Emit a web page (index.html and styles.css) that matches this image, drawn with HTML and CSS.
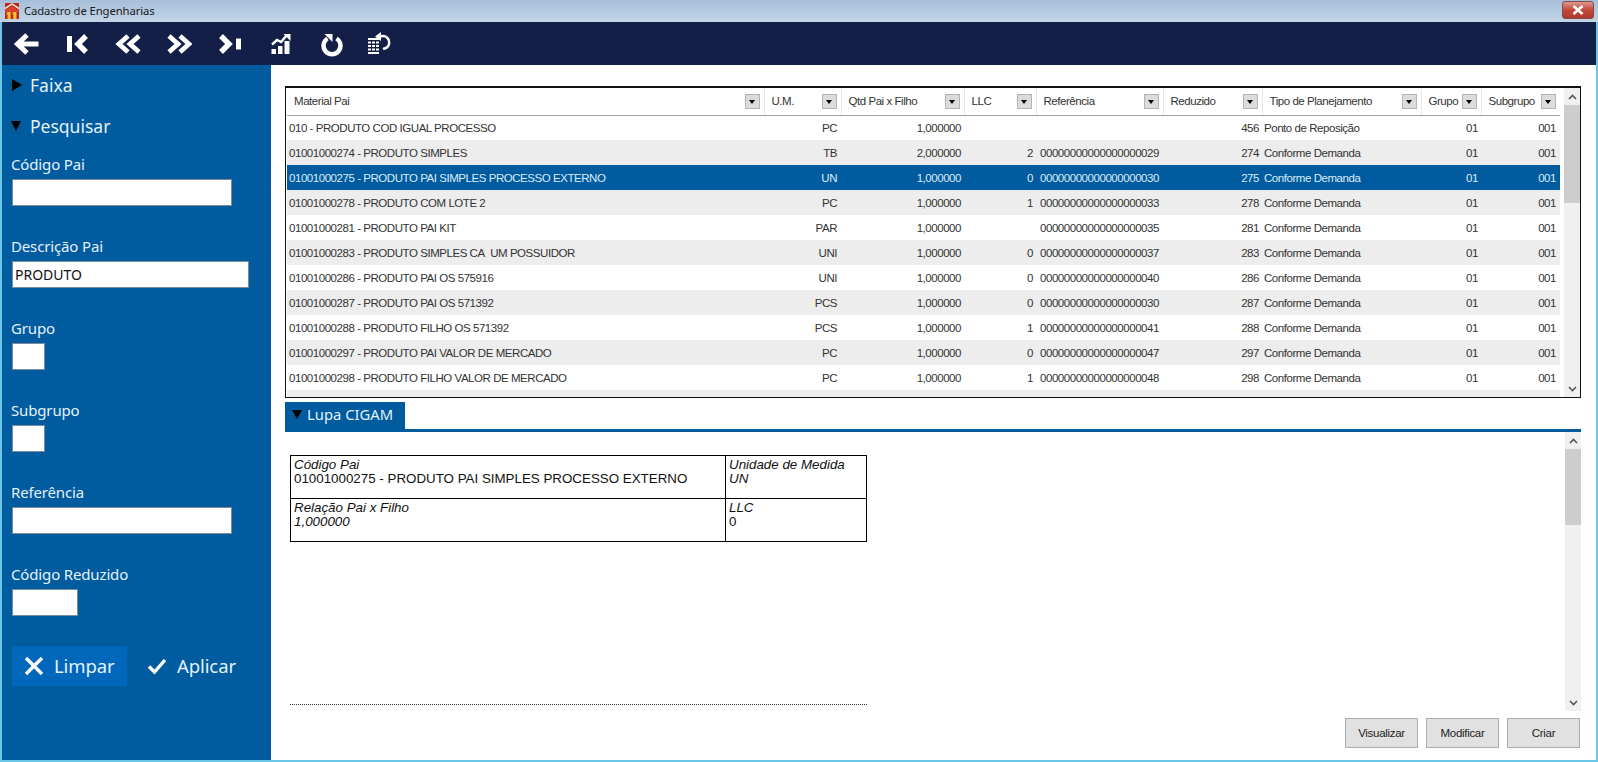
FILE: index.html
```html
<!DOCTYPE html>
<html lang="pt">
<head>
<meta charset="utf-8">
<title>Cadastro de Engenharias</title>
<link rel="stylesheet" href="styles.css">
</head>
<body>
<div class="window">
  <header class="titlebar">
    <div class="title-left">
      <svg class="app-logo" viewBox="0 0 14 16"><path d="M0 0h14v16H0z" fill="#b8261c"/><path d="M0 4.500 7 0l7 4.500v2L7 2 0 6.500z" fill="#f0d8c8"/><path d="M0 7.500 7 3l7 4.500V9H0z" fill="#d8402c"/><path d="M2.500 9h3.200v7H2.500zM8.300 9h3.200v7H8.300z" fill="#f0c030"/><path d="M1.500 9.500h1.200v2H1.500zM7.300 9.500h1.200v2H7.300z" fill="#f0c030"/></svg>
      <span>Cadastro de Engenharias</span>
    </div>
    <button class="close"><svg viewBox="0 0 12 10"><path d="M1.500 1 10.500 9M10.500 1 1.500 9" stroke="#fff" stroke-width="2.600"/></svg></button>
  </header>
  <div class="frame">
    <nav class="toolbar">
      <svg class="tool" viewBox="0 0 26 26"><path d="M25.500 13H6M14 4 4.500 13l9.500 9" fill="none" stroke="#fff" stroke-width="5"/></svg>
      <svg class="tool" viewBox="0 0 26 26"><path d="M3 5h5v16H3z" fill="#fff"/><path d="M22 5l-8 8 8 8" fill="none" stroke="#fff" stroke-width="5.400"/></svg>
      <svg class="tool" viewBox="0 0 26 26"><path d="M13 5l-9 8 9 8M24 5l-9 8 9 8" fill="none" stroke="#fff" stroke-width="4.800"/></svg>
      <svg class="tool" viewBox="0 0 26 26"><path d="M3 5l9 8-9 8M14 5l9 8-9 8" fill="none" stroke="#fff" stroke-width="4.800"/></svg>
      <svg class="tool" viewBox="0 0 26 26"><path d="M4 5l8 8-8 8" fill="none" stroke="#fff" stroke-width="5.400"/><path d="M19 7.500h5v11h-5z" fill="#fff"/></svg>
      <svg class="tool" viewBox="0 0 26 26"><path d="M3.500 18h4.500v5H3.500zM10 15h4.500v8H10zM16.500 10h5v13h-5z" fill="#fff"/><path d="M4 13.500l5-4.500 4 2 6-7" fill="none" stroke="#fff" stroke-width="2.400"/><path d="M15.500 3h7v7z" fill="#fff"/></svg>
      <svg class="tool" viewBox="0 0 26 26"><path d="M8.500 7.500a8.500 8.500 0 1 0 9 0" fill="none" stroke="#fff" stroke-width="4.400"/><path d="M5.500 3h8v8z" fill="#fff"/></svg>
      <svg class="tool tool-last" viewBox="0 0 26 26"><path d="M3 7h11v2H3zM3 10.500h3v2H3zM7 10.500h3v2H7zM11 10.500h3v2h-3zM3 14h3v2H3zM7 14h3v2H7zM11 14h3v2h-3zM3 17.500h3v2H3zM7 17.500h3v2H7zM11 17.500h3v2h-3zM3 21h11v2H3z" fill="#fff"/><path d="M14 6c7-3 11 2 10 7s-4 4-6 5" fill="none" stroke="#fff" stroke-width="2.400"/><path d="M16 1v9l-6-4.500z" fill="#fff"/></svg>
    </nav>
    <div class="content">
      <aside class="sidebar">
        <div class="section"><i class="tri tri-right"></i>Faixa</div>
        <div class="section section-open"><i class="tri tri-down"></i>Pesquisar</div>
        <div class="fields">
          <label class="field">Código Pai<input class="input input-lg" type="text"></label>
          <label class="field">Descrição Pai<input class="input input-xl" type="text" value="PRODUTO"></label>
          <label class="field">Grupo<input class="input input-xs" type="text"></label>
          <label class="field">Subgrupo<input class="input input-xs" type="text"></label>
          <label class="field">Referência<input class="input input-lg" type="text"></label>
          <label class="field">Código Reduzido<input class="input input-sm" type="text"></label>
        </div>
        <div class="side-actions">
          <button class="side-btn side-btn-on"><svg viewBox="0 0 20 20"><path d="M2 2 18 18M18 2 2 18" stroke="#fff" stroke-width="3.400"/></svg>Limpar</button>
          <button class="side-btn"><svg viewBox="0 0 20 20"><path d="M2 10.500 7.500 16 18 4" fill="none" stroke="#fff" stroke-width="3.400"/></svg>Aplicar</button>
        </div>
      </aside>
      <main class="main">
        <section class="grid">
          <div class="grid-view">
            <table class="data">
              <colgroup>
                <col class="c1"><col class="c2"><col class="c3"><col class="c4"><col class="c5"><col class="c6"><col class="c7"><col class="c8"><col class="c9">
              </colgroup>
              <thead>
                <tr>
                  <th><div class="th"><span>Material Pai</span><b class="fbtn"></b></div></th>
                  <th><div class="th"><span>U.M.</span><b class="fbtn"></b></div></th>
                  <th><div class="th"><span>Qtd Pai x Filho</span><b class="fbtn"></b></div></th>
                  <th><div class="th"><span>LLC</span><b class="fbtn"></b></div></th>
                  <th><div class="th"><span>Referência</span><b class="fbtn"></b></div></th>
                  <th><div class="th"><span>Reduzido</span><b class="fbtn"></b></div></th>
                  <th><div class="th"><span>Tipo de Planejamento</span><b class="fbtn"></b></div></th>
                  <th><div class="th"><span>Grupo</span><b class="fbtn"></b></div></th>
                  <th><div class="th"><span>Subgrupo</span><b class="fbtn"></b></div></th>
                </tr>
              </thead>
              <tbody>
                <tr><td>010 - PRODUTO COD IGUAL PROCESSO</td><td class="r">PC</td><td class="r">1,000000</td><td class="r"></td><td></td><td class="r">456</td><td>Ponto de Reposição</td><td class="r">01</td><td class="r">001</td></tr>
                <tr><td>01001000274 - PRODUTO SIMPLES</td><td class="r">TB</td><td class="r">2,000000</td><td class="r">2</td><td>00000000000000000029</td><td class="r">274</td><td>Conforme Demanda</td><td class="r">01</td><td class="r">001</td></tr>
                <tr class="sel"><td>01001000275 - PRODUTO PAI SIMPLES PROCESSO EXTERNO</td><td class="r">UN</td><td class="r">1,000000</td><td class="r">0</td><td>00000000000000000030</td><td class="r">275</td><td>Conforme Demanda</td><td class="r">01</td><td class="r">001</td></tr>
                <tr><td>01001000278 - PRODUTO COM LOTE 2</td><td class="r">PC</td><td class="r">1,000000</td><td class="r">1</td><td>00000000000000000033</td><td class="r">278</td><td>Conforme Demanda</td><td class="r">01</td><td class="r">001</td></tr>
                <tr><td>01001000281 - PRODUTO PAI KIT</td><td class="r">PAR</td><td class="r">1,000000</td><td class="r"></td><td>00000000000000000035</td><td class="r">281</td><td>Conforme Demanda</td><td class="r">01</td><td class="r">001</td></tr>
                <tr><td>01001000283 - PRODUTO SIMPLES CA&nbsp; UM POSSUIDOR</td><td class="r">UNI</td><td class="r">1,000000</td><td class="r">0</td><td>00000000000000000037</td><td class="r">283</td><td>Conforme Demanda</td><td class="r">01</td><td class="r">001</td></tr>
                <tr><td>01001000286 - PRODUTO PAI OS 575916</td><td class="r">UNI</td><td class="r">1,000000</td><td class="r">0</td><td>00000000000000000040</td><td class="r">286</td><td>Conforme Demanda</td><td class="r">01</td><td class="r">001</td></tr>
                <tr><td>01001000287 - PRODUTO PAI OS 571392</td><td class="r">PCS</td><td class="r">1,000000</td><td class="r">0</td><td>00000000000000000030</td><td class="r">287</td><td>Conforme Demanda</td><td class="r">01</td><td class="r">001</td></tr>
                <tr><td>01001000288 - PRODUTO FILHO OS 571392</td><td class="r">PCS</td><td class="r">1,000000</td><td class="r">1</td><td>00000000000000000041</td><td class="r">288</td><td>Conforme Demanda</td><td class="r">01</td><td class="r">001</td></tr>
                <tr><td>01001000297 - PRODUTO PAI VALOR DE MERCADO</td><td class="r">PC</td><td class="r">1,000000</td><td class="r">0</td><td>00000000000000000047</td><td class="r">297</td><td>Conforme Demanda</td><td class="r">01</td><td class="r">001</td></tr>
                <tr><td>01001000298 - PRODUTO FILHO VALOR DE MERCADO</td><td class="r">PC</td><td class="r">1,000000</td><td class="r">1</td><td>00000000000000000048</td><td class="r">298</td><td>Conforme Demanda</td><td class="r">01</td><td class="r">001</td></tr>
                <tr><td>&nbsp;</td><td></td><td></td><td></td><td></td><td></td><td></td><td></td><td></td></tr>
              </tbody>
            </table>
          </div>
          <div class="vscroll vscroll-grid">
            <svg class="sarrow" viewBox="0 0 9 6"><path d="M1 5 4.500 1.500 8 5" fill="none" stroke="#555" stroke-width="1.600"/></svg>
            <div class="sarea"><div class="thumb thumb-grid"></div></div>
            <svg class="sarrow" viewBox="0 0 9 6"><path d="M1 1 4.500 4.500 8 1" fill="none" stroke="#555" stroke-width="1.600"/></svg>
          </div>
        </section>
        <div class="tab"><i class="tri tri-down tri-sm"></i>Lupa CIGAM</div>
        <section class="lupa">
          <div class="report">
            <table class="rep">
              <tr class="rep-top">
                <td class="rep-a"><em>Código Pai</em><br>01001000275 - PRODUTO PAI SIMPLES PROCESSO EXTERNO</td>
                <td class="rep-b"><em>Unidade de Medida</em><br><em>UN</em></td>
              </tr>
              <tr class="rep-bot">
                <td class="rep-a"><em>Relação Pai x Filho</em><br><em>1,000000</em></td>
                <td class="rep-b"><em>LLC</em><br>0</td>
              </tr>
            </table>
            <div class="dotted"></div>
          </div>
          <div class="vscroll vscroll-lupa">
            <svg class="sarrow" viewBox="0 0 9 6"><path d="M1 5 4.500 1.500 8 5" fill="none" stroke="#555" stroke-width="1.600"/></svg>
            <div class="sarea"><div class="thumb thumb-lupa"></div></div>
            <svg class="sarrow" viewBox="0 0 9 6"><path d="M1 1 4.500 4.500 8 1" fill="none" stroke="#555" stroke-width="1.600"/></svg>
          </div>
        </section>
        <div class="actions">
          <button class="act">Visualizar</button>
          <button class="act">Modificar</button>
          <button class="act">Criar</button>
        </div>
      </main>
    </div>
  </div>
</div>
</body>
</html>
```
FILE: styles.css
```css
* { box-sizing: border-box; }
html, body { margin: 0; padding: 0; width: 1598px; height: 762px; overflow: hidden; }
body { font-family: "Liberation Sans", Arial, sans-serif; background: #fff; }
.window { width: 1598px; height: 762px; display: flex; flex-direction: column; }

.titlebar { height: 22px; flex: none; display: flex; justify-content: space-between; align-items: flex-start; background: linear-gradient(#a6bfd9, #c3d5e6); padding: 0 4px 0 5px; }
.title-left { display: flex; align-items: center; gap: 5px; height: 21px; font: 11.300px "Noto Sans", sans-serif; letter-spacing: -0.1px; color: #1a1a1a; }
.app-logo { width: 14px; height: 16px; }
.close { width: 32px; height: 18px; margin-top: 1px; padding: 0; border: 1px solid #8a4a44; border-radius: 3px; background: linear-gradient(#dc9a90, #c4473a 50%, #b03a30); display: flex; align-items: center; justify-content: center; }
.close svg { width: 12px; height: 10px; }

.frame { flex: 1; min-height: 0; display: flex; flex-direction: column; border: solid #6cc6e6; border-width: 0 2px 2px; }
.toolbar { height: 43px; flex: none; background: #131f47; display: flex; align-items: center; gap: 25px; padding-left: 11px; }
.tool { width: 26px; height: 26px; flex: none; }
.tool-last { margin-left: -5px; }

.content { flex: 1; min-height: 0; display: flex; }
.sidebar { width: 269px; flex: none; background: #005b9f; color: #e4f1fb; font: 15px "Noto Sans", sans-serif; letter-spacing: -0.15px; padding: 8px 0 0 9px; }
.section { display: flex; align-items: center; height: 24px; font-size: 17.500px; letter-spacing: 0; gap: 8px; }
.section-open { margin-top: 17px; gap: 9px; }
.tri { display: block; width: 0; height: 0; flex: none; }
.tri-right { margin-left: 1px; border: 6px solid transparent; border-left: 10px solid #000; border-right: 0; }
.tri-down { border: 5.500px solid transparent; border-top: 10px solid #000; border-bottom: 0; }
.tri-sm { border-width: 9px 5px 0; }

.fields { margin-top: 13px; display: flex; flex-direction: column; gap: 27px; }
.field { display: flex; flex-direction: column; height: 55px; line-height: 26px; }
.input { display: block; height: 27px; margin: 2px 0 0 1px; background: #fff; border: 1px solid #7a8ba0; padding: 0 2px; font: 14px "Noto Sans", sans-serif; color: #111; outline: 0; border-radius: 0; }
.input-lg { width: 220px; }
.input-xl { width: 237px; }
.input-xs { width: 33px; }
.input-sm { width: 66px; }

.side-actions { display: flex; margin: 30px 0 0 1px; }
.side-btn { width: 115px; height: 40px; border: 0; background: none; color: #e4f1fb; font: 18.500px "Noto Sans", sans-serif; letter-spacing: -0.1px; display: flex; align-items: center; gap: 10px; padding: 0 0 2px 12px; }
.side-btn svg { width: 20px; height: 20px; flex: none; margin-top: 2px; }
.side-btn-on { background: #0067bb; }
.side-btn + .side-btn { padding-left: 20px; }

.main { flex: 1; min-width: 0; background: #fff; padding: 21px 15px 0 14px; display: flex; flex-direction: column; }
.grid { height: 312px; flex: none; display: flex; border: solid #111; border-width: 2px 1px 1px; background: #fff; }
.grid-view { width: 1273px; margin-left: 1px; flex: none; overflow: hidden; }
.data { width: 1273px; table-layout: fixed; border-collapse: collapse; font: 11.500px "Liberation Sans", sans-serif; letter-spacing: -0.45px; color: #333; }
.c1 { width: 477px; } .c2 { width: 77px; } .c3 { width: 123px; } .c4 { width: 72px; } .c5 { width: 127px; } .c6 { width: 99px; } .c7 { width: 159px; } .c8 { width: 60px; } .c9 { width: 79px; }
.data th { height: 27px; padding: 0; font-weight: 400; text-align: left; border-bottom: 1px solid #a0a0a0; border-right: 1px solid #e6e6e6; }
.th { display: flex; align-items: center; justify-content: space-between; padding: 0 4px 0 7px; }
.fbtn { width: 15px; height: 15px; background: #dcdcdc; border: 1px solid #b4b4b4; position: relative; flex: none; }
.fbtn::after { content: ""; position: absolute; left: 3px; top: 5px; border: 3.500px solid transparent; border-top: 4px solid #000; border-bottom: 0; }
.data td { height: 25px; padding: 0 3px 0 4px; white-space: nowrap; overflow: hidden; }
.data td:first-child { padding-left: 2px; }
.data td:nth-child(2), .data td:nth-child(9) { padding-right: 4px; }
.data td:nth-child(7) { padding-left: 2px; }
.data td.r { text-align: right; }
.data tbody tr:nth-child(even) td { background: #ededed; }
.data tbody tr.sel td { background: #005b9f; color: #dcecf8; }

.vscroll { display: flex; flex-direction: column; align-items: stretch; background: #f0f0f0; width: 16px; flex: none; }
.vscroll-grid { margin-left: 4px; }
.sarrow { width: 9px; height: 6px; margin: 6px auto 5px; flex: none; }
.sarea { flex: 1; min-height: 0; }
.thumb { background: #cdcdcd; }
.thumb-grid { height: 98px; }
.thumb-lupa { height: 76px; }

.tab { width: 120px; height: 27px; flex: none; margin-top: 4px; background: #005b9f; color: #e4f1fb; font: 14.800px "Noto Sans", sans-serif; display: flex; align-items: center; gap: 5px; padding: 0 0 3px 7px; }
.lupa { height: 282px; flex: none; border-top: 3px solid #005b9f; display: flex; justify-content: space-between; }
.report { flex: 1; display: flex; flex-direction: column; padding: 23px 0 0 5px; }
.rep { width: 577px; border-collapse: collapse; table-layout: fixed; font: 13.350px/14px "Liberation Sans", sans-serif; color: #111; }
.rep td { border: 1px solid #000; vertical-align: top; padding: 2px 3px 0; }
.rep-a { width: 435px; }
.rep-top td { height: 43px; }
.rep-bot td { height: 43px; }
.dotted { width: 577px; margin-top: 162px; border-top: 1px dotted #333; }

.actions { display: flex; justify-content: flex-end; gap: 8px; margin: 7px 1px 0 0; }
.act { width: 73px; height: 30px; background: #e1e1e1; border: 1px solid #adadad; font: 11.500px "Liberation Sans", sans-serif; letter-spacing: -0.3px; color: #222; padding: 0; }
```
